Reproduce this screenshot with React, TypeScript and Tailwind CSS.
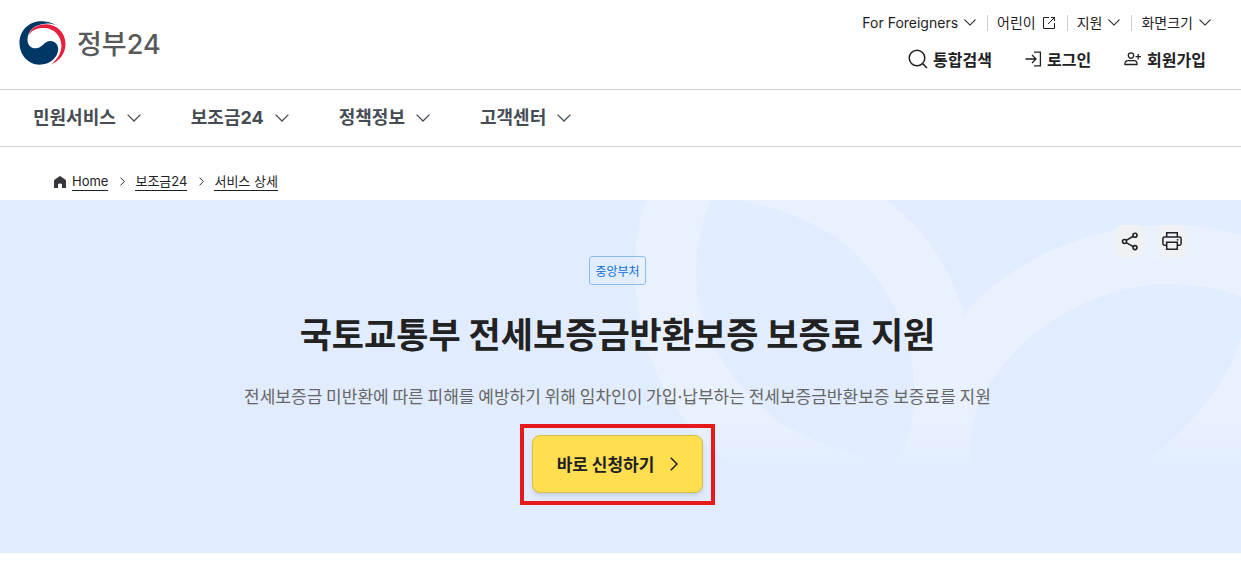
const utilLinks = [
    { label: "For Foreigners", icon: "down" },
    { label: "어린이", icon: "external" },
    { label: "지원", icon: "down" },
    { label: "화면크기", icon: "down" },
];

const menus = ["민원서비스", "보조금24", "정책정보", "고객센터"];

const crumbs = ["Home", "보조금24", "서비스 상세"];

function Logo() {
    return (
        <a href="#" className="flex items-center gap-[11px] pb-[3px] font-['Inter','Noto_Sans_CJK_KR',sans-serif] text-[27px] leading-8 text-[#58595b]">
            <svg viewBox="57 63 140 132" className="h-11 w-[47px]" aria-hidden="true">
                <path
                    fill="#003764"
                    d="M168 76C150 66 138 64 122 64C86 64 58 93 58 129C58 166 86 194 117 194C150 194 174 172 174 147C174 132 163 123 150 123C132 123 126 145 106 145C92 145 82 134 82 119C82 92 105 72 135 71C148 70 158 72 168 76Z"
                />
                <path
                    fill="#e8203d"
                    d="M85 108C92 82 115 73 138 73C172 74 196 100 196 132C196 160 178 183 152 194C172 178 183 160 184 138C184 108 160 83 130 84C110 84 92 92 85 108Z"
                />
            </svg>
            <span className="pt-1 font-medium">정부24</span>
        </a>
    );
}

function DownIcon({ className }: { className: string }) {
    return (
        <svg viewBox="0 0 14 8" className={className} fill="none" stroke="currentColor" strokeWidth="1.3" aria-hidden="true">
            <path d="M0.6 0.6L7 7L13.4 0.6" />
        </svg>
    );
}

function RightIcon({ className }: { className: string }) {
    return (
        <svg viewBox="0 0 8 14" className={className} fill="none" stroke="currentColor" strokeWidth="1.5" aria-hidden="true">
            <path d="M0.8 0.8L7 7L0.8 13.2" />
        </svg>
    );
}

function ExternalIcon() {
    return (
        <svg viewBox="0 0 14 14" className="size-[14px]" fill="none" stroke="currentColor" aria-hidden="true">
            <path d="M7 1.5H1.5V12.5H12.5V7M9 1.5H12.5V5M12.5 1.5L6 8" />
        </svg>
    );
}

function SearchIcon() {
    return (
        <svg viewBox="0 0 20 20" className="size-5" fill="none" stroke="currentColor" strokeWidth="1.5" aria-hidden="true">
            <circle cx="9" cy="9" r="7.8" />
            <path d="M14.6 14.6L19 19" />
        </svg>
    );
}

function LoginIcon() {
    return (
        <svg viewBox="0 0 17 16" className="h-4 w-[17px]" fill="none" stroke="currentColor" strokeWidth="1.3" aria-hidden="true">
            <path d="M9 1.2H15.4V14.8H9M0.5 8H11M7 4L11 8L7 12" />
        </svg>
    );
}

function JoinIcon() {
    return (
        <svg viewBox="0 0 18 16" className="h-4 w-[18px]" fill="none" stroke="currentColor" strokeWidth="1.3" aria-hidden="true">
            <circle cx="7" cy="4.6" r="2.7" />
            <path d="M1 13.5V12.3C1 10.6 2.6 9.6 4.4 9.6H9.6C11.4 9.6 13 10.6 13 12.3V13.5ZM14.2 3V8.4M11.5 5.7H17" />
        </svg>
    );
}

function HomeIcon() {
    return (
        <svg viewBox="0 0 12 12" className="size-3" fill="#33363d" aria-hidden="true">
            <path d="M6 0L11.2 3.6Q12 4.2 12 5V12H8V8.5Q8 7.5 6 7.5T4 8.5V12H0V5Q0 4.2 0.8 3.6Z" />
        </svg>
    );
}

function ShareIcon() {
    return (
        <svg viewBox="0 0 20 20" className="size-5" fill="none" stroke="currentColor" strokeWidth="1.6" aria-hidden="true">
            <circle cx="4.5" cy="10.5" r="2" />
            <circle cx="15" cy="4.2" r="2" />
            <circle cx="15" cy="16.6" r="2" />
            <path d="M6.2 9.4L13.3 5.2M6.2 11.6L13.3 15.6" />
        </svg>
    );
}

function PrintIcon() {
    return (
        <svg viewBox="0 0 20 20" className="size-5" fill="none" stroke="currentColor" strokeWidth="1.5" aria-hidden="true">
            <path d="M4.7 6V1.7H15.3V6M4.7 14.2H2.5Q0.9 14.2 0.9 12.6V7.6Q0.9 6 2.5 6H17.5Q19.1 6 19.1 7.6V12.6Q19.1 14.2 17.5 14.2H15.3M4.7 11.2H15.3V18.3H4.7Z" />
            <path d="M15.6 8V9.6" />
        </svg>
    );
}

/* Two overlapping light rings that fade out towards the bottom of the banner */
function Rings() {
    return (
        <svg viewBox="0 0 621 353" className="absolute top-0 right-0 h-[353px] w-[621px]" aria-hidden="true">
            <defs>
                <linearGradient id="fade" x1="0" y1="0" x2="0" y2="1">
                    <stop offset="0.62" stopColor="#e9f1ff" />
                    <stop offset="0.76" stopColor="#e9f1ff" stopOpacity="0" />
                </linearGradient>
            </defs>
            <path
                fill="url(#fade)"
                fillRule="evenodd"
                d="M26 0C18 22 15 48 15 72C16 132 36 186 68 223C100 262 140 290 180 300V353H350V240C352 210 368 182 386 162C430 108 500 84 545 84C575 84 600 88 621 97V137C612 175 575 225 524 263V353H621V35C590 27 570 25 545 25C470 26 390 60 344 115C330 65 305 30 266 0ZM91 0H119C155 6 190 20 220 40C262 72 294 130 294 187C294 230 284 265 266 263C220 252 180 235 160 223C110 185 76 130 76 72C76 45 82 20 91 0Z"
            />
        </svg>
    );
}

export default function App() {
    return (
        <div className="bg-white font-['Noto_Sans_CJK_KR',sans-serif] text-[#1e2124]">
            <header>
                <div className="flex h-[90px] items-center justify-between border-b border-[#cdd1d5] pl-[19px]">
                    <Logo />

                    <div className="flex flex-col items-end gap-3 pb-2">
                        <ul className="flex items-center pr-[30px] font-['Inter','Noto_Sans_CJK_KR',sans-serif] text-sm leading-6">
                            {utilLinks.map((link) => (
                                <li key={link.label} className="group flex items-center">
                                    <button className="flex items-center gap-[6px]">
                                        {link.label}
                                        {link.icon === "down" ? <DownIcon className="h-[7px] w-3" /> : <ExternalIcon />}
                                    </button>
                                    <span className="mr-[9px] ml-[11px] h-4 w-px bg-[#cdd1d5] group-last:hidden" />
                                </li>
                            ))}
                        </ul>

                        <div className="flex items-center gap-[33px] pr-[35px] text-base leading-6 font-bold">
                            <button className="flex items-center gap-[5px]">
                                <SearchIcon />
                                통합검색
                            </button>
                            <a href="#" className="flex items-center gap-[5px]">
                                <LoginIcon />
                                로그인
                            </a>
                            <a href="#" className="flex items-center gap-[5px]">
                                <JoinIcon />
                                회원가입
                            </a>
                        </div>
                    </div>
                </div>

                <nav className="flex h-[57px] items-center gap-[50px] border-b border-[#cdd1d5] pl-[33px]">
                    {menus.map((menu) => (
                        <button key={menu} className="flex items-center gap-[11px] font-['Inter','Noto_Sans_CJK_KR',sans-serif] text-lg font-bold text-[#464c53]">
                            {menu}
                            <DownIcon className="h-2 w-[14px]" />
                        </button>
                    ))}
                </nav>
            </header>

            <ol className="flex h-[53px] items-center pt-4 pl-[54px] font-['Inter','Noto_Sans_CJK_KR',sans-serif] text-[13px] leading-[18px]">
                {crumbs.map((crumb, i) => (
                    <li key={crumb} className="flex items-center">
                        {i === 0 ? (
                            <span className="mr-[6px]">
                                <HomeIcon />
                            </span>
                        ) : (
                            <RightIcon className="mr-[10px] ml-3 h-[9px] w-[5px]" />
                        )}
                        <a href="#" className="border-b border-[#1e2124]">
                            {crumb}
                        </a>
                    </li>
                ))}
            </ol>

            <main className="relative h-[353px] bg-[#e1edff]">
                <Rings />

                <div className="absolute top-[25px] right-[54px] flex gap-3">
                    <button aria-label="공유" className="flex h-8 w-[30px] items-center justify-center rounded-lg bg-[#eff1f5]">
                        <ShareIcon />
                    </button>
                    <button aria-label="인쇄" className="flex h-8 w-[30px] items-center justify-center rounded-lg bg-[#eff1f5]">
                        <PrintIcon />
                    </button>
                </div>

                <div className="relative mx-auto flex w-fit flex-col items-center pt-14 pr-[6px]">
                    <span className="rounded-[3px] border border-[#8bbdf5] px-[5px] py-1 text-xs leading-[19px] text-[#0b6ee0]">중앙부처</span>
                    <h1 className="mt-[22px] text-[35px] leading-[52px] font-bold text-[#222222]">국토교통부 전세보증금반환보증 보증료 지원</h1>
                    <p className="mt-[25px] text-[17px] leading-6 text-[#666666]">
                        전세보증금 미반환에 따른 피해를 예방하기 위해 임차인이 가입
                        <span className="font-['Inter',sans-serif]">·</span>
                        납부하는 전세보증금반환보증 보증료를 지원
                    </p>
                    <div className="mt-[15px] border-4 border-[#e8191c] px-2 pt-[7px] pb-2">
                        <button className="flex h-[58px] items-center gap-4 rounded-lg border border-[#d9bd4a] bg-[#ffde50] px-6 text-[17px] font-bold shadow-md">
                            바로 신청하기
                            <RightIcon className="h-[14px] w-2" />
                        </button>
                    </div>
                </div>
            </main>
        </div>
    );
}
